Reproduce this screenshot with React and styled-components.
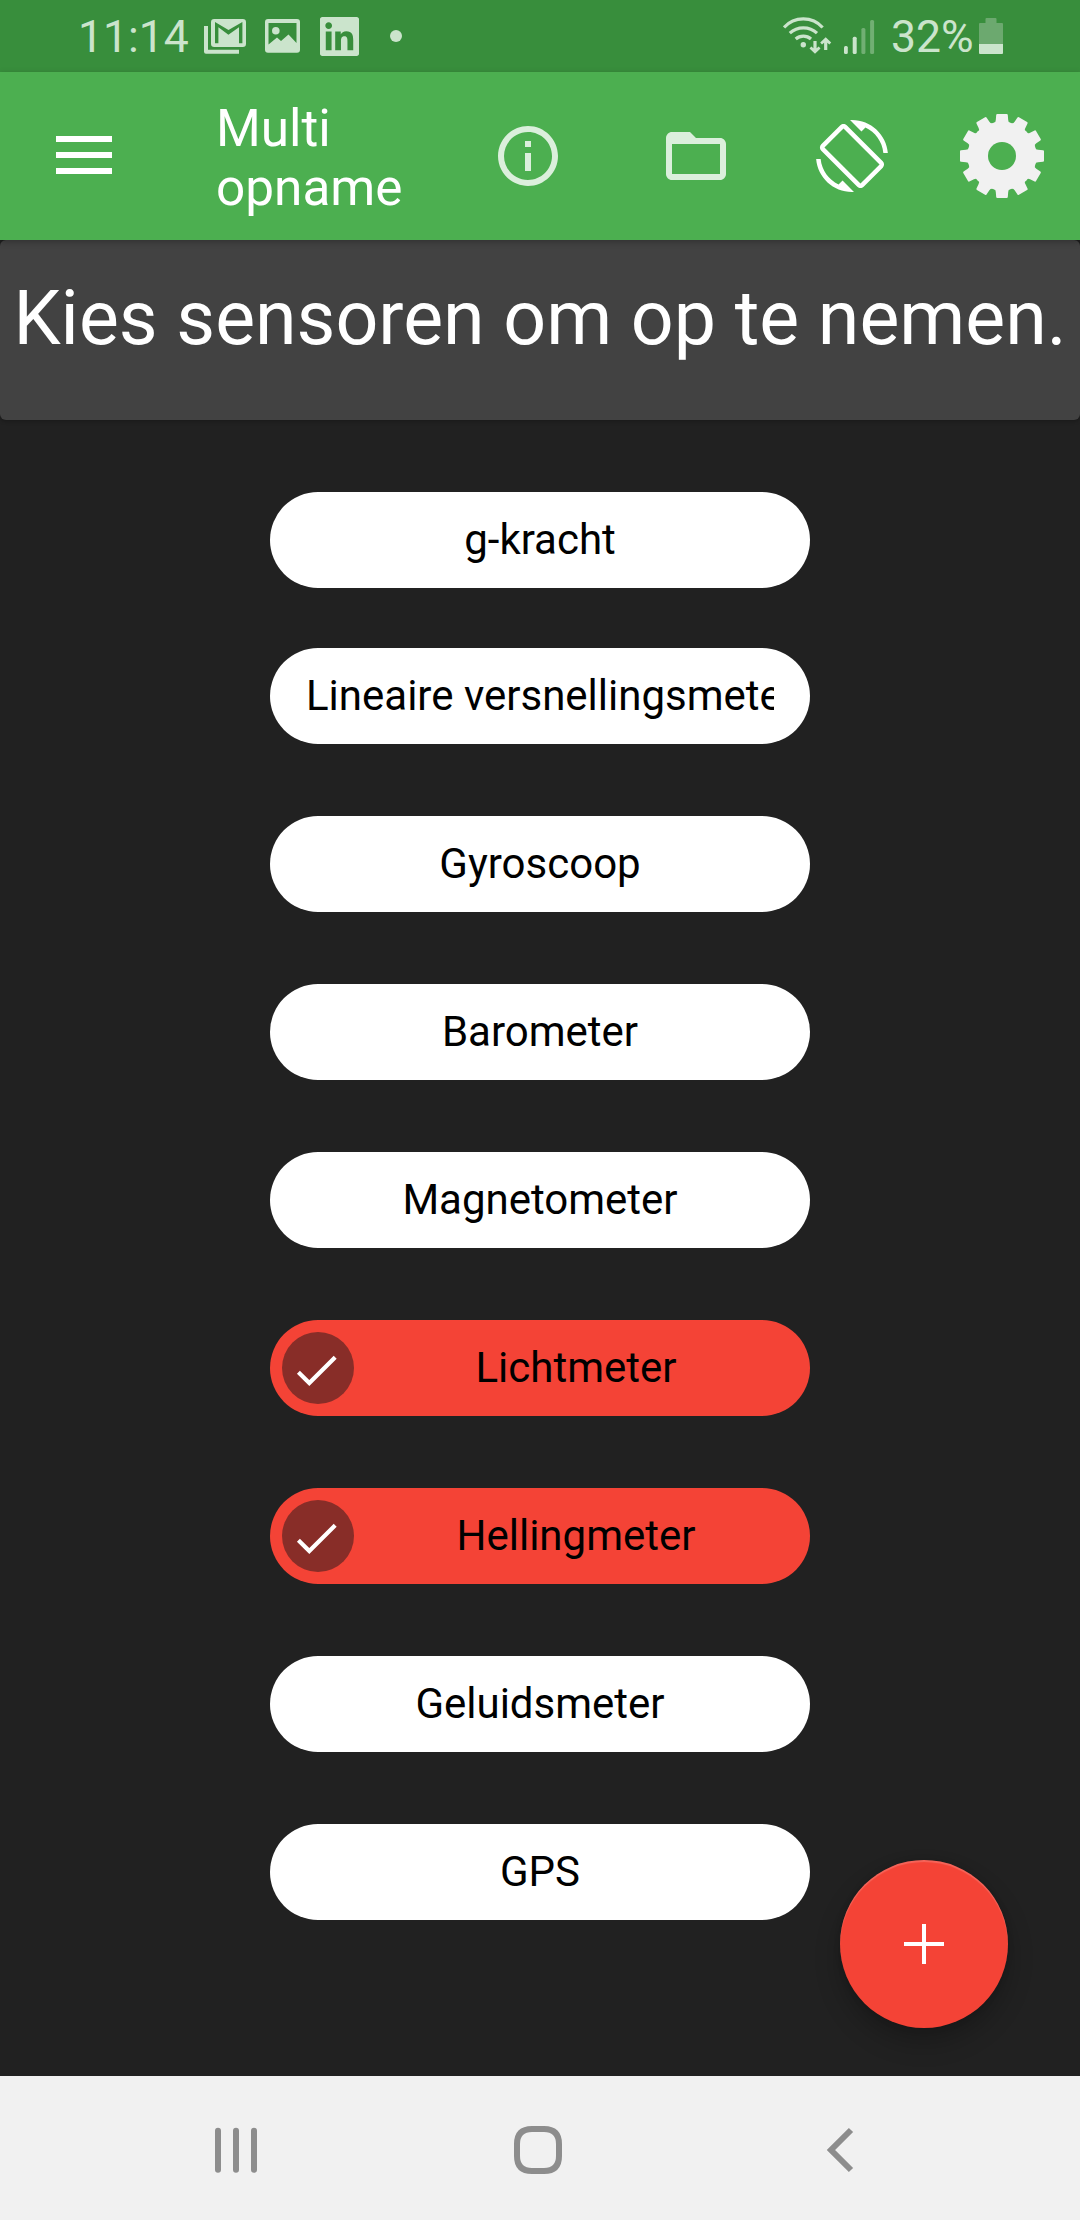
import React from "react";
import styled, { createGlobalStyle } from "styled-components";

const GlobalStyle = createGlobalStyle`
  * { box-sizing: border-box; }
  body { margin: 0; background: #212121; }
  svg { display: block; flex: none; }
  button { border: 0; padding: 0; background: none; font: inherit; color: inherit; }
`;

const Screen = styled.div`
  position: relative;
  display: flex;
  flex-direction: column;
  width: 1080px;
  height: 2220px;
  overflow: hidden;
  background: #212121;
  font-family: Roboto, "Liberation Sans", sans-serif;
`;

const StatusBar = styled.header`
  display: flex;
  align-items: center;
  justify-content: space-between;
  height: 72px;
  padding: 0 77px 0 78px;
  background: #388e3c;
  color: #cbe4cc;
  font-size: 44.5px;
  line-height: 72px;
`;

const StatusGroup = styled.div`
  display: flex;
  align-items: center;
`;

const StatusText = styled.span`
  width: ${(p) => p.$width}px;
  margin-left: ${(p) => p.$before || 0}px;
  white-space: nowrap;
  transform: translateY(1px);
`;

const StatusIcon = styled.svg`
  width: ${(p) => p.$width}px;
  height: 72px;
  margin-left: ${(p) => p.$before || 0}px;
  fill: #cbe4cc;
`;

const AppBar = styled.nav`
  position: relative;
  display: flex;
  align-items: center;
  height: 168px;
  padding: 0 36px 0 48px;
  background: #4caf50;
  color: #fff;
  box-shadow: 0 2px 6px rgba(0, 0, 0, 0.25);
`;

const BarButton = styled.button`
  display: flex;
  width: ${(p) => p.$size}px;
  height: ${(p) => p.$size}px;
  margin-left: ${(p) => p.$before || 0}px;
  opacity: ${(p) => p.$opacity || 1};
  svg { width: 100%; height: 100%; fill: currentColor; }
`;

const Title = styled.h1`
  width: 204px;
  margin: 0 0 0 96px;
  padding-top: 4px;
  font-size: 51.3px;
  font-weight: 400;
  line-height: 59px;
`;

const Prompt = styled.section`
  height: 180px;
  padding-top: 34px;
  border-radius: 6px;
  background: #424242;
  color: #fff;
  font-size: 75.25px;
  line-height: 88px;
  text-align: center;
  white-space: nowrap;
  box-shadow: 0 1px 4px rgba(0, 0, 0, 0.3);
`;

const SensorList = styled.main`
  display: flex;
  flex: 1;
  flex-direction: column;
  align-items: center;
  gap: 72px;
  padding-top: 72px;
`;

const Chip = styled.button`
  display: flex;
  align-items: center;
  flex: none;
  width: 540px;
  height: 96px;
  margin-top: ${(p) => (p.$tight ? -12 : 0)}px;
  padding: 0 36px 0 ${(p) => (p.$selected ? 12 : 36)}px;
  border-radius: 48px;
  background: ${(p) => (p.$selected ? "#f44336" : "#fff")};
  color: #000;
`;

const CheckBadge = styled.span`
  flex: none;
  width: 72px;
  height: 72px;
  margin-right: 24px;
  border-radius: 50%;
  background: #882d28;
`;

const ChipLabel = styled.span`
  flex: 1;
  min-width: 0;
  overflow: hidden;
  font-size: 42px;
  line-height: 96px;
  white-space: nowrap;
  text-align: ${(p) => (p.$clipped ? "left" : "center")};
`;

const AddButton = styled.button`
  position: absolute;
  right: 72px;
  bottom: 192px;
  display: flex;
  align-items: center;
  justify-content: center;
  width: 168px;
  height: 168px;
  border-radius: 50%;
  background: #f44336;
  box-shadow: 0 14px 26px rgba(0, 0, 0, 0.24), 0 0 6px rgba(0, 0, 0, 0.14),
    inset 0 2px 1px rgba(255, 255, 255, 0.18);
`;

const NavBar = styled.footer`
  display: flex;
  align-items: center;
  gap: 230px;
  height: 144px;
  padding: 4px 0 0 200px;
  background: #f1f1f1;
  svg {
    width: 72px;
    height: 72px;
    fill: none;
    stroke: #8d8d8d;
    stroke-width: 6;
  }
`;

const sensors = [
  { name: "g-kracht" },
  { name: "Lineaire versnellingsmeter", tight: true, clipped: true },
  { name: "Gyroscoop" },
  { name: "Barometer" },
  { name: "Magnetometer" },
  { name: "Lichtmeter", selected: true },
  { name: "Hellingmeter", selected: true },
  { name: "Geluidsmeter" },
  { name: "GPS" },
];

function MailIcon() {
  return (
    <StatusIcon $width={42} $before={14} viewBox="0 0 42 72">
      <path d="M0 26h4v23.7h31v4H2q-2 0-2-2z" />
      <path
        fillRule="evenodd"
        d="M10.2 19h28.6q3.2 0 3.2 3.2v21.6q0 3.2-3.2 3.2H10.2Q7 47 7 43.8V22.2Q7 19 10.2 19zM11 22v21.3h3.4V27.2l10 7.6 10.6-7.6v16.1h3.4V22L24.5 30z"
      />
    </StatusIcon>
  );
}

function PictureIcon() {
  return (
    <StatusIcon $width={35} $before={19} viewBox="0 0 35 72">
      <path
        fillRule="evenodd"
        d="M3 19h29q3 0 3 3v27.7q0 3-3 3H3q-3 0-3-3V22q0-3 3-3zM3.5 23v21.5L12 37.5l4 3.5 7.5-6.5 8 8.5V23z"
      />
      <circle cx="10.8" cy="30.7" r="3.8" />
    </StatusIcon>
  );
}

function LinkedInIcon() {
  return (
    <StatusIcon $width={39} $before={20} viewBox="0 -10.46 24 44.31">
      <path d="M20.447 20.452h-3.554v-5.569c0-1.328-.027-3.037-1.852-3.037-1.853 0-2.136 1.445-2.136 2.939v5.667H9.351V9h3.414v1.561h.046c.477-.9 1.637-1.85 3.37-1.85 3.601 0 4.267 2.37 4.267 5.455v6.286zM5.337 7.433c-1.144 0-2.063-.926-2.063-2.065 0-1.138.92-2.063 2.063-2.063 1.14 0 2.064.925 2.064 2.063 0 1.139-.925 2.065-2.064 2.065zm1.782 13.019H3.555V9h3.564v11.452zM22.6 0H1.4C.6 0 0 .6 0 1.4v21.2C0 23.4.6 24 1.4 24h21.2c.8 0 1.4-.6 1.4-1.4V1.4C24 .6 23.4 0 22.6 0z" />
    </StatusIcon>
  );
}

function WifiIcon() {
  return (
    <StatusIcon $width={49} viewBox="783 0 49 72">
      <g fill="none" stroke="#cbe4cc" strokeWidth="3.2">
        <path d="M784 27.5A26 26 0 0 1 822.6 27.5" />
        <path d="M789.8 33.2A20 20 0 0 1 817 33.2" />
        <path d="M795.7 39A11.5 11.5 0 0 1 811 39" />
      </g>
      <circle cx="803.3" cy="44.7" r="2.7" />
      <path d="M813.4 41h3.2v7.2l2.1-1.8 1.8 2-5.5 5.3-5.5-5.3 1.8-2 2.1 1.8zM824.1 50h3.2v-7.2l2.1 1.8 1.8-2-5.5-5.3-5.5 5.3 1.8 2 2.1-1.8z" />
    </StatusIcon>
  );
}

function SignalIcon() {
  return (
    <StatusIcon $width={31} $before={12} viewBox="844 0 31 72">
      <rect x="844" y="46" width="3.8" height="8" rx="1.5" />
      <rect x="852.7" y="36.7" width="4" height="17.3" rx="1.5" />
      <rect x="861.4" y="28" width="4" height="26" rx="1.5" fill="#71af73" />
      <rect x="870.1" y="20" width="4" height="34" rx="1.5" fill="#71af73" />
    </StatusIcon>
  );
}

function BatteryIcon() {
  return (
    <StatusIcon $width={24} viewBox="979 0 24 72">
      <path
        d="M985.5 23v-4q0-1 1-1h9q1 0 1 1v4h5.5q1 0 1 1v20h-24V24q0-1 1-1z"
        fill="#6ca96f"
      />
      <path d="M979 44h24v9q0 1-1 1h-22q-1 0-1-1z" />
    </StatusIcon>
  );
}

function GearIcon() {
  return (
    <svg viewBox="-42 -42 84 84">
      <defs>
        <mask id="gear-hole">
          <rect x="-42" y="-42" width="84" height="84" fill="#fff" />
          <circle r="14" fill="#000" />
        </mask>
      </defs>
      <g fill="#f1f1f1" mask="url(#gear-hole)">
        <circle r="34.5" />
        {Array.from({ length: 12 }, (_, i) => (
          <path
            key={i}
            transform={`rotate(${i * 30})`}
            d="M-8-33Q-6.3-33.5-6.2-36L-5.8-41Q-5.7-42-4.7-42H4.7Q5.7-42 5.8-41L6.2-36Q6.3-33.5 8-33z"
          />
        ))}
      </g>
    </svg>
  );
}

export default function App() {
  return (
    <Screen>
      <GlobalStyle />
      <StatusBar>
        <StatusGroup>
          <StatusText $width={112}>11:14</StatusText>
          <MailIcon />
          <PictureIcon />
          <LinkedInIcon />
          <StatusIcon $width={12} $before={31} viewBox="0 0 12 72">
            <circle cx="6" cy="36" r="6" />
          </StatusIcon>
        </StatusGroup>
        <StatusGroup>
          <WifiIcon />
          <SignalIcon />
          <StatusText $width={88} $before={16}>32%</StatusText>
          <BatteryIcon />
        </StatusGroup>
      </StatusBar>

      <AppBar>
        <BarButton $size={72} aria-label="Menu">
          <svg viewBox="0 0 72 72">
            <path d="M8 16h56v6H8zM8 32h56v6H8zM8 48h56v6H8z" />
          </svg>
        </BarButton>
        <Title>Multi opname</Title>
        <BarButton $size={72} $before={72} $opacity={0.8} aria-label="Info">
          <svg viewBox="0 0 24 24">
            <path d="M11 7h2v2h-2zm0 4h2v6h-2zm1-9C6.48 2 2 6.48 2 12s4.48 10 10 10 10-4.48 10-10S17.52 2 12 2zm0 18c-4.41 0-8-3.59-8-8s3.59-8 8-8 8 3.59 8 8-3.59 8-8 8z" />
          </svg>
        </BarButton>
        <BarButton $size={72} $before={96} $opacity={0.8} aria-label="Map">
          <svg viewBox="0 0 24 24">
            <path d="M20 6h-8l-2-2H4c-1.1 0-1.99.9-1.99 2L2 18c0 1.1.9 2 2 2h16c1.1 0 2-.9 2-2V8c0-1.1-.9-2-2-2zm0 12H4V8h16v10z" />
          </svg>
        </BarButton>
        <BarButton $size={72} $before={84} aria-label="Draaien">
          <svg viewBox="0 0 24 24">
            <path d="M16.48 2.52c3.27 1.55 5.61 4.72 5.97 8.48h1.5C23.44 4.84 18.29 0 12 0l-.66.03 3.81 3.81 1.33-1.32zm-6.25-.77c-.59-.59-1.54-.59-2.12 0L1.75 8.11c-.59.59-.59 1.54 0 2.12l12.02 12.02c.59.59 1.54.59 2.12 0l6.36-6.36c.59-.59.59-1.54 0-2.12L10.23 1.75zm4.6 19.44L2.81 9.17l6.36-6.36 12.02 12.02-6.36 6.36zm-7.31.29C4.25 19.94 1.91 16.76 1.55 13H.05C.56 19.16 5.71 24 12 24l.66-.03-3.81-3.81-1.33 1.32z" />
          </svg>
        </BarButton>
        <BarButton $size={84} $before={72} aria-label="Instellingen">
          <GearIcon />
        </BarButton>
      </AppBar>

      <Prompt>Kies sensoren om op te nemen.</Prompt>

      <SensorList>
        {sensors.map((s) => (
          <Chip key={s.name} $selected={s.selected} $tight={s.tight}>
            {s.selected && (
              <CheckBadge>
                <svg width="72" height="72" viewBox="0 0 72 72">
                  <path
                    d="M16.4 40.2L27.3 51L53.2 25.3"
                    fill="none"
                    stroke="#fff"
                    strokeWidth="4.2"
                  />
                </svg>
              </CheckBadge>
            )}
            <ChipLabel $clipped={s.clipped}>{s.name}</ChipLabel>
          </Chip>
        ))}
      </SensorList>

      <AddButton aria-label="Toevoegen">
        <svg width="40" height="40" viewBox="0 0 40 40" fill="#fff">
          <path d="M18 0h4v18h18v4H22v18h-4V22H0v-4h18z" />
        </svg>
      </AddButton>

      <NavBar>
        <svg viewBox="0 0 72 72" strokeLinecap="round">
          <path d="M18 16.8v39M36 16.8v39M54 16.8v39" />
        </svg>
        <svg viewBox="0 0 72 72">
          <path d="M30 15H42C52 15 57 20 57 30V42C57 52 52 57 42 57H30C20 57 15 52 15 42V30C15 20 20 15 30 15z" />
        </svg>
        <svg viewBox="0 0 72 72">
          <path d="M47 16L27 36L47 56" />
        </svg>
      </NavBar>
    </Screen>
  );
}
